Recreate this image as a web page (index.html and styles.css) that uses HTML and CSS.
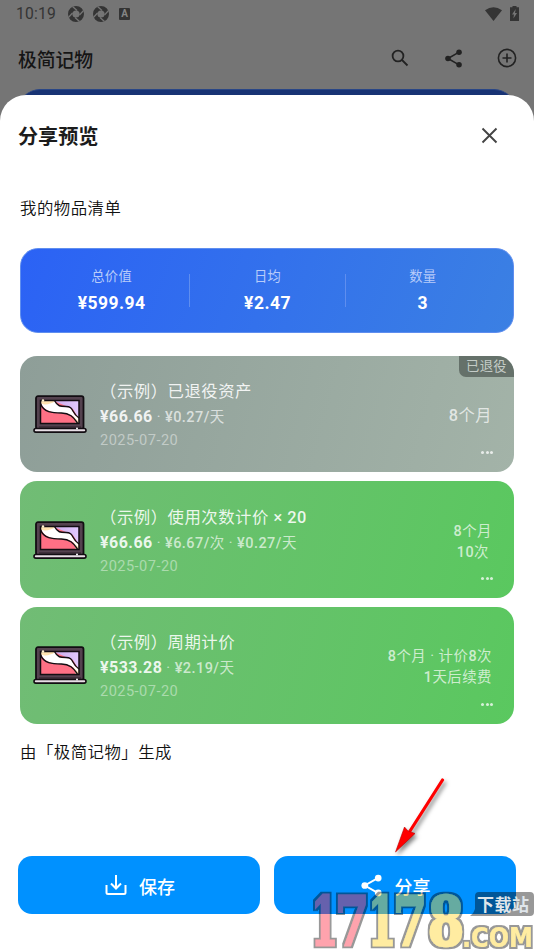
FILE: index.html
```html
<!DOCTYPE html>
<html lang="zh-CN">
<head>
<meta charset="utf-8">
<title>极简记物</title>
<link rel="stylesheet" href="styles.css">
</head>
<body>
<svg width="0" height="0" class="defs">
  <defs>
    <filter id="outline" x="-20%" y="-10%" width="140%" height="120%">
      <feMorphology in="SourceAlpha" operator="dilate" radius="2.4" result="fat"/>
      <feFlood flood-color="#000"/><feComposite in2="fat" operator="in" result="edge"/>
      <feMerge><feMergeNode in="edge"/><feMergeNode in="SourceGraphic"/></feMerge>
    </filter>
    <linearGradient id="lilac" x1="0" y1="0" x2="1" y2="0"><stop offset="0" stop-color="#c9a9e8"/><stop offset="1" stop-color="#e2c9ff"/></linearGradient>
    <symbol id="aperture" viewBox="0 0 16 16">
      <circle cx="8" cy="8" r="5.800" fill="none" stroke="currentColor" stroke-width="4.400"/>
      <path d="M4.500.5 9 4.500M15.600 4.500 11.500 9M11.500 15.500 7 11.500M.4 11.500 4.500 7" stroke="#757575" stroke-width="1.300"/>
    </symbol>
    <symbol id="share" viewBox="0 0 24 24">
      <path d="M19 4 5 12l14 8" fill="none" stroke="currentColor" stroke-width="2"/>
      <circle cx="19" cy="4.2" r="3.5" fill="currentColor"/><circle cx="5" cy="12" r="3.5" fill="currentColor"/><circle cx="19" cy="19.8" r="3.5" fill="currentColor"/>
    </symbol>
    <symbol id="laptop" viewBox="0 0 54 38">
      <rect x="3" y="1.2" width="47.5" height="33" rx="2" fill="#54424f" stroke="#120d12" stroke-width="1.8"/>
      <rect x="7.500" y="5.500" width="38.500" height="23" fill="#ff7085"/>
      <path d="M20 5.500h26v18.500L40 14z" fill="url(#lilac)"/>
      <path d="M7.500 5.500h14l2 5-6 2L7.500 9zM40 20l6 2v6.500H43z" fill="#ffe3b0"/>
      <path d="M8 8c4 3 9 1 14-1.500 3 5 6 5.500 11 5.500 8 0 5 6 12 11v3c-4-5-8-8-16-8C20 18 11 16 8 8z" fill="#fff"/>
      <path d="M21.500 5.500c3 6 6 6 11.500 6 8 0 5 6 13 11.500M7.500 8.500c3 9 12 9.500 21 9.500 8 0 12 4 16 10" fill="none" stroke="#120d12" stroke-width="1.400"/>
      <rect x="7.500" y="5.500" width="38.500" height="23" fill="none" stroke="#120d12" stroke-width="1.500"/>
      <path d="M6 32h42" stroke="#2a1f28" stroke-width="1"/>
      <rect x="1" y="33.500" width="52" height="3.600" rx="1.800" fill="#e8dfe6" stroke="#120d12" stroke-width="1.600"/>
      <circle cx="44" cy="33.500" r="1" fill="#fff"/><circle cx="10" cy="5.500" r="1.200" fill="#fff3d0"/>
    </symbol>
  </defs>
</svg>
<div class="phone">
  <div class="status">
    <span class="clock">10:19</span>
    <svg class="ap" width="16" height="16"><use href="#aperture"/></svg>
    <svg class="ap" width="16" height="16"><use href="#aperture"/></svg>
    <span class="ime">A</span>
    <svg class="wifi" width="17" height="14" viewBox="0 0 17 14"><path d="M0 3.300Q8.500-3 17 3.300L8.500 14z" fill="#343434"/></svg>
    <svg width="9" height="15" viewBox="0 0 9 15"><path d="M2.500 0h4v1.300H9V15H0V1.300h2.500z" fill="#343434"/><path d="M5.700 3 2 8.500h2L3.400 12.500 7 7H5z" fill="#757575"/></svg>
  </div>
  <div class="appbar">
    <h1>极简记物</h1>
    <svg class="search" width="18" height="18" viewBox="0 0 18 18" fill="none" stroke="#222" stroke-width="1.800"><circle cx="7" cy="7" r="5.400"/><path d="m11 11 5.500 5.500"/></svg>
    <svg class="bar-share" width="19" height="19"><use href="#share"/></svg>
    <svg width="20" height="20" viewBox="0 0 20 20" fill="none" stroke="#222" stroke-width="1.600"><circle cx="10" cy="10" r="8.600"/><path d="M10 5.500v9M5.500 10h9"/></svg>
  </div>
  <div class="behind"></div>

  <section class="sheet">
    <header class="sheet-head">
      <h2>分享预览</h2>
      <svg width="17" height="17" viewBox="0 0 17 17"><path d="m1.500 1.500 14 14m0-14-14 14" stroke="#444" stroke-width="1.900"/></svg>
    </header>
    <p class="list-title">我的物品清单</p>
    <div class="summary">
      <div class="stat"><span>总价值</span><b>¥599.94</b></div>
      <div class="stat"><span>日均</span><b>¥2.47</b></div>
      <div class="stat"><span>数量</span><b>3</b></div>
    </div>
    <div class="items">
      <article class="item retired">
        <svg class="pic" width="54" height="38"><use href="#laptop"/></svg>
        <div class="info"><h3>（示例）已退役资产</h3><p class="price"><b>¥66.66</b> · <em>¥0.27/</em>天</p><p class="date">2025-07-20</p></div>
        <div class="age big"><p><em>8</em>个月</p></div>
        <span class="badge">已退役</span>
        <span class="dots"><i></i><i></i><i></i></span>
      </article>
      <article class="item">
        <svg class="pic" width="54" height="38"><use href="#laptop"/></svg>
        <div class="info"><h3>（示例）使用次数计价 <em>× 20</em></h3><p class="price"><b>¥66.66</b> · <em>¥6.67/</em>次 · <em>¥0.27/</em>天</p><p class="date">2025-07-20</p></div>
        <div class="age"><p><em>8</em>个月</p><p class="count"><em>10</em>次</p></div>
        <span class="dots"><i></i><i></i><i></i></span>
      </article>
      <article class="item">
        <svg class="pic" width="54" height="38"><use href="#laptop"/></svg>
        <div class="info"><h3>（示例）周期计价</h3><p class="price"><b>¥533.28</b> · <em>¥2.19/</em>天</p><p class="date">2025-07-20</p></div>
        <div class="age"><p><em>8</em>个月 · 计价<em>8</em>次</p><p><em>1</em>天后续费</p></div>
        <span class="dots"><i></i><i></i><i></i></span>
      </article>
    </div>
    <p class="credit">由「极简记物」生成</p>
    <div class="actions">
      <button><svg class="save" width="22" height="22" viewBox="0 0 22 22" fill="none" stroke="#fff" stroke-width="2"><path d="M1.500 11v7.500a1.500 1.500 0 0 0 1.500 1.500h16a1.500 1.500 0 0 0 1.500-1.500V11M11 1v13M6 9.500l5 5 5-5"/></svg><span>保存</span></button>
      <button><svg class="send" width="23" height="23"><use href="#share"/></svg><span>分享</span></button>
    </div>
  </section>

  <svg class="arrow" width="60" height="85" viewBox="0 0 60 85"><path d="M52.500 4 20 55" stroke="#f00" stroke-width="3.200" stroke-linecap="round"/><path d="M5.500 76 14.500 51 18 55 25 57.500z" fill="#f00" stroke="#b00" stroke-width=".6"/></svg>
  <svg class="mark" width="226" height="62" viewBox="308 888 226 62">
    <g opacity=".4">
      <g class="digits" filter="url(#outline)">
        <g class="pink">
          <text x="311" y="945" textLength="27" lengthAdjust="spacingAndGlyphs">1</text>
          <text x="335" y="945" textLength="34" lengthAdjust="spacingAndGlyphs">7</text>
        </g>
        <text x="368" y="945" textLength="28" lengthAdjust="spacingAndGlyphs">1</text>
        <text x="393" y="945" textLength="34" lengthAdjust="spacingAndGlyphs">7</text>
        <text x="428" y="945" textLength="36" lengthAdjust="spacingAndGlyphs">8</text>
      </g>
      <text class="com" filter="url(#outline)" x="462" y="946.500" textLength="71" lengthAdjust="spacingAndGlyphs">.COM</text>
      <path d="M479 892h51q4 0 4 4v16q0 4-4 4h-60q4-3 5-7v-13q0-4 4-4z"/>
    </g>
    <text class="site" x="477" y="910.500" textLength="52">下载站</text>
  </svg>
</div>
</body>
</html>
```
FILE: styles.css
```css
* { box-sizing: border-box; margin: 0; padding: 0; }
body { font-family: Roboto, "Noto Sans CJK SC", sans-serif; background: #757575; }
em { font-style: normal; font-weight: 500; }
.defs { position: absolute; }
.phone { position: relative; width: 534px; height: 950px; overflow: hidden; background: #757575; color: #222; }

.status { display: flex; align-items: center; height: 27px; padding: 0 15px 0 16px; color: #343434; }
.clock { font-size: 15.700px; letter-spacing: .2px; line-height: 28px; padding-top: 1px; width: 52px; white-space: nowrap; }
.ap { margin-right: 9px; }
.ime { width: 11px; height: 12px; background: #343434; color: #858585; font-size: 10px; font-weight: 700; line-height: 12px; text-align: center; border-radius: 1px; margin-left: 1px; }
.wifi { margin-left: auto; margin-right: 8px; }

.appbar { display: flex; align-items: center; height: 62px; padding: 0 17px 0 18px; gap: 36px; }
.appbar h1 { flex: 1; font-size: 18.8px; font-weight: 500; line-height: 28px; color: #151515; padding-top: 5px; }
.search { margin-right: -1px; }
.bar-share { margin-right: -2px; }
.behind { height: 60px; margin: 0 18px; border-radius: 22px; background: #183374; border-top: 1px solid #294686; }

.sheet { position: absolute; inset: 95px 0 0; background: #fff; border-radius: 26px 26px 0 0; display: flex; flex-direction: column; }
.sheet-head { display: flex; align-items: center; justify-content: space-between; height: 80px; padding: 0 36px 0 18px; }
.sheet-head h2 { font-size: 20.100px; font-weight: 700; line-height: 30px; padding-top: 3px; color: #1c1c1c; }
.list-title, .credit { font-size: 16.400px; font-weight: 350; letter-spacing: .5px; line-height: 24px; padding-left: 20px; color: #111; }
.list-title { margin-top: 22px; }

.summary { display: grid; grid-template-columns: repeat(3, 1fr); align-items: center; height: 85px; margin: 27px 20px 0; padding: 0 13px; border-radius: 18px; background: linear-gradient(110deg, #2b62f5, #3b80e3); border: 1px solid #5f8eef; color: #fff; }
.stat { display: flex; flex-direction: column; align-items: center; justify-content: center; height: 33px; }
.stat + .stat { border-left: 1px solid #5f8eef; }
.stat span { font-size: 13.300px; line-height: 20px; letter-spacing: .3px; color: #b8ccfa; margin-bottom: 4px; }
.stat b { font-size: 17.500px; line-height: 24px; letter-spacing: .45px; }

.items { display: grid; grid-template-rows: repeat(3, 116.400px); row-gap: 9.500px; margin: 22.500px 20px 0; }
.item { position: relative; display: flex; align-items: center; padding: 0 22px 0 13px; border-radius: 17px; overflow: hidden; background: linear-gradient(105deg, #71bc75, #5ac85f); color: rgba(255,255,255,.88); }
.item.retired { background: linear-gradient(105deg, #8e9e98, #a3b3a8); }
.pic { flex: none; }
.info { margin-left: 13px; padding-top: 2px; flex: 1; white-space: nowrap; }
.info h3 { font-size: 16.400px; font-weight: 400; letter-spacing: .5px; line-height: 26px; padding-top: 1px; margin-bottom: -1px; }
.price { font-size: 14.500px; line-height: 25px; letter-spacing: .45px; color: rgba(255,255,255,.66); }
.price b { font-size: 16px; font-weight: 700; color: rgba(255,255,255,.88); }
.date { font-size: 14.600px; line-height: 23px; letter-spacing: .45px; color: rgba(255,255,255,.44); margin-top: -1px; }
.age { text-align: right; font-size: 14.400px; line-height: 21px; letter-spacing: .5px; color: rgba(255,255,255,.7); white-space: nowrap; padding-top: 4px; }
.age.big { font-size: 16.300px; padding-top: 3px; }
.count { padding-right: 3px; }
.badge { position: absolute; top: 0; right: 0; width: 55px; height: 21px; border-radius: 0 0 0 7px; background: #65716a; color: #c4ccc7; font-size: 13.300px; line-height: 21px; letter-spacing: .3px; text-align: center; }
.dots { position: absolute; right: 21px; bottom: 17.500px; display: flex; gap: 1.500px; }
.dots i { width: 3px; height: 3px; border-radius: 50%; background: rgba(255,255,255,.75); }
.credit { margin-top: 17px; }

.actions { display: grid; grid-template-columns: 1fr 1fr; gap: 14px; height: 58px; margin: auto 18px 36px; }
.actions button { display: flex; align-items: center; justify-content: center; gap: 12px; border: 0; border-radius: 14px; background: #0091ff; color: #fff; font: 500 18px/26px Roboto, "Noto Sans CJK SC", sans-serif; }
.actions span { padding-top: 5px; }
.save { margin-left: 2px; }

.arrow { position: absolute; left: 390px; top: 776px; filter: drop-shadow(2px 3px 2px rgba(0,0,0,.5)); }
.mark { position: absolute; left: 308px; top: 888px; overflow: visible; }
.digits text { font: 700 68px "DejaVu Serif", serif; fill: #ffd214; stroke: #ffd214; stroke-width: 2.500px; stroke-linejoin: miter; }
.digits .pink text { fill: #ff1e35; stroke: #ff1e35; }
.com { font: 700 27px "DejaVu Sans", sans-serif; fill: #ffd214; }
.site { font: 700 17px "Noto Sans CJK SC", sans-serif; fill: #dfe5ea; }
```
